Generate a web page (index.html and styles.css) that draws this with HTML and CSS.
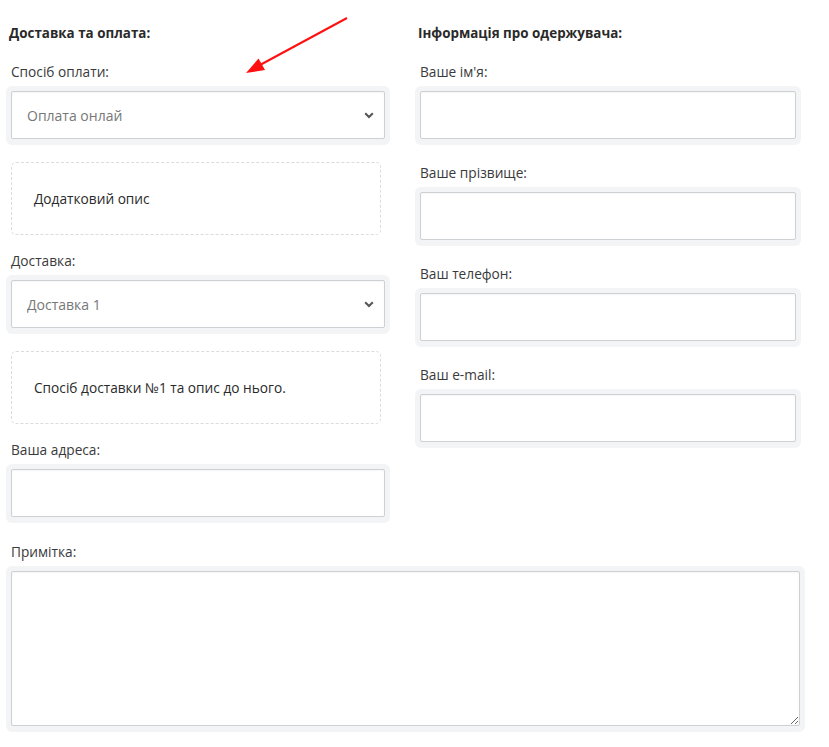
FILE: index.html
```html
<!DOCTYPE html>
<html lang="uk">
<head>
<meta charset="utf-8">
<title>Оформлення замовлення</title>
<link rel="stylesheet" href="styles.css">
</head>
<body>
<div class="page">
  <div class="columns">
    <div class="col">
      <div class="heading">Доставка та оплата:</div>
      <div class="field">
        <label class="label">Спосіб оплати:</label>
        <div class="frame select-frame">
          <select class="control select"><option>Оплата онлай</option></select>
          <svg class="chevron" width="10" height="7" viewBox="0 0 10 7"><path d="M1.2 1.2 L5 5 L8.8 1.2" fill="none" stroke="#555" stroke-width="2"/></svg>
        </div>
      </div>
      <div class="note">Додатковий опис</div>
      <div class="field">
        <label class="label">Доставка:</label>
        <div class="frame select-frame">
          <select class="control select"><option>Доставка 1</option></select>
          <svg class="chevron" width="10" height="7" viewBox="0 0 10 7"><path d="M1.2 1.2 L5 5 L8.8 1.2" fill="none" stroke="#555" stroke-width="2"/></svg>
        </div>
      </div>
      <div class="note">Спосіб доставки №1 та опис до нього.</div>
      <div class="field">
        <label class="label">Ваша адреса:</label>
        <div class="frame"><input class="control" type="text"></div>
      </div>
    </div>
    <div class="col">
      <div class="heading">Інформація про одержувача:</div>
      <div class="field field-r">
        <label class="label">Ваше ім'я:</label>
        <div class="frame"><input class="control" type="text"></div>
      </div>
      <div class="field field-r">
        <label class="label">Ваше прізвище:</label>
        <div class="frame"><input class="control" type="text"></div>
      </div>
      <div class="field field-r">
        <label class="label">Ваш телефон:</label>
        <div class="frame"><input class="control" type="text"></div>
      </div>
      <div class="field field-r">
        <label class="label">Ваш e-mail:</label>
        <div class="frame"><input class="control" type="text"></div>
      </div>
    </div>
  </div>
  <div class="field comment">
    <label class="label">Примітка:</label>
    <div class="frame"><textarea class="control area"></textarea></div>
  </div>
  <svg class="arrow" width="829" height="100" viewBox="0 0 829 100">
    <line x1="347" y1="18" x2="260" y2="65" stroke="#ff1010" stroke-width="2"/>
    <polygon points="246,73 265,70 258.5,58.5" fill="#ff1010"/>
  </svg>
</div>
</body>
</html>
```

FILE: styles.css
```css
* { box-sizing: border-box; }
html, body { margin: 0; padding: 0; background: #fff; }
body {
  font-family: "Open Sans", "Noto Sans", sans-serif;
  color: #333;
}
.page {
  position: relative;
  width: 829px;
  padding: 23px 0 0 6px;
}
.columns {
  display: grid;
  grid-template-columns: 384px 386px;
  column-gap: 25px;
}
.heading {
  font-size: 13.4px;
  font-weight: 700;
  line-height: 20px;
  color: #2a2a2a;
  padding-left: 3px;
  margin-bottom: 19px;
}
.field { margin-bottom: 17px; }
.field-r { margin-bottom: 18px; }
.label {
  display: block;
  font-size: 13.7px;
  line-height: 20px;
  color: #3a3a3a;
  padding-left: 5px;
  margin-bottom: 4px;
}
.frame {
  position: relative;
  background: #f3f4f5;
  border-radius: 6px;
  padding: 5px 5px 6px;
}
.control {
  display: block;
  width: 100%;
  height: 48px;
  margin: 0;
  border: 1px solid #cdd1d3;
  border-radius: 2px;
  background: #fff;
  box-shadow: inset 0 1px 2px rgba(0, 0, 0, 0.04);
  font-family: inherit;
  font-size: 14px;
  color: #777;
  outline: none;
}
.select {
  appearance: none;
  -webkit-appearance: none;
  padding: 0 30px 0 15px;
}
.chevron {
  position: absolute;
  right: 16px;
  top: 26px;
}
.note {
  margin: 0 0 16px 5px;
  width: 370px;
  height: 73px;
  border: 1px dashed #dcdcdc;
  border-radius: 5px;
  display: flex;
  align-items: center;
  padding-left: 22px;
  font-size: 13.7px;
  color: #2a2a2a;
}
.comment { margin-top: 2px; width: 799px; }
.area {
  height: 155px;
  resize: both;
  padding: 8px 12px;
}
.arrow {
  position: absolute;
  left: 0;
  top: 0;
  pointer-events: none;
}
```
